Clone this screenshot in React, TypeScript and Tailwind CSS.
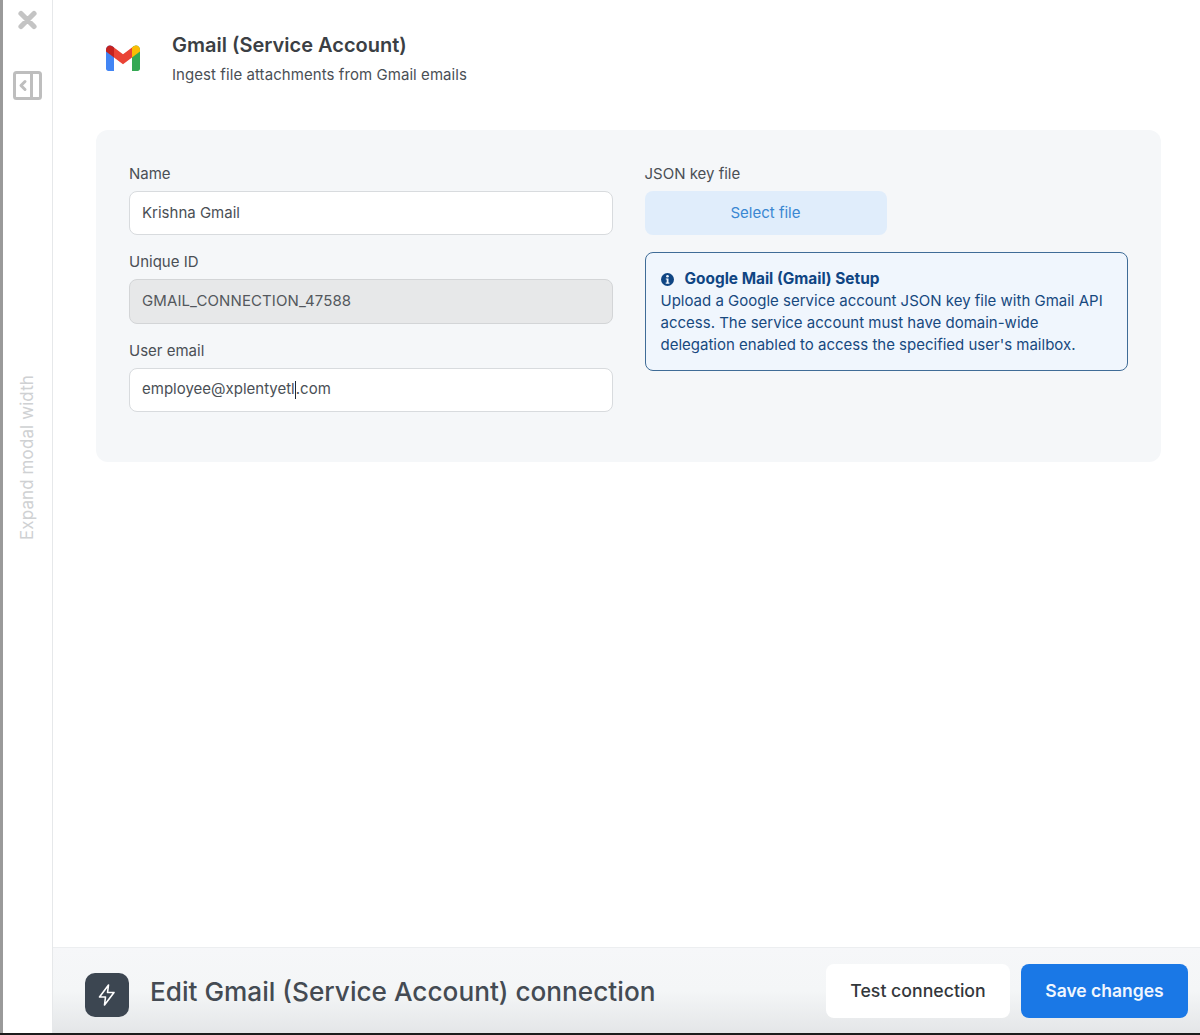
import React from "react";

function GmailIcon() {
  return (
    <svg width="34" height="26" viewBox="0 0 34 26" fill="none">
      <path d="M0 4.500C0 1.200 3.600-.8 6.400 1.200L8 2.400V26H2.400C1 26 0 25 0 23.600Z" fill="#4285F4" />
      <path d="M34 4.500C34 1.200 30.400-.8 27.600 1.200L26 2.400V26h5.600c1.400 0 2.400-1 2.400-2.400Z" fill="#34A853" />
      <path d="M26 2.400 17 9.200 8 2.400V12.400l9 6.800 9-6.800Z" fill="#EA4335" />
      <path d="M0 4.500C0 1.200 3.600-.8 6.400 1.200L8 2.400V12.400L0 6.400Z" fill="#C5221F" />
      <path d="M34 4.500C34 1.200 30.400-.8 27.600 1.200L26 2.400V12.400L34 6.400Z" fill="#FBBC04" />
    </svg>
  );
}

function CloseIcon() {
  return (
    <svg width="21" height="20" viewBox="0 0 21 20">
      <path d="M4 3.500 10.500 10M17 3.500 10.500 10M4 16.500 10.500 10M17 16.500 10.500 10" stroke="#c4c4c4" strokeWidth="5.200" strokeLinecap="round" />
    </svg>
  );
}

function CollapseIcon() {
  return (
    <svg width="29" height="29" viewBox="0 0 29 29" fill="none">
      <rect x="1.500" y="1.500" width="26" height="26" rx="2" stroke="#bebebe" strokeWidth="3" />
      <path d="M18.500 2v25" stroke="#bebebe" strokeWidth="3" />
      <path d="M12 10.500 8 14.500l4 4" stroke="#bebebe" strokeWidth="3" strokeLinecap="round" strokeLinejoin="round" />
    </svg>
  );
}

function Field({ label, children }: { label: string; children: React.ReactNode }) {
  return (
    <div className="flex flex-col">
      <label className="mb-[8px] text-[15px] leading-[18px] text-[#4a4f55]">{label}</label>
      {children}
    </div>
  );
}

export default function App() {
  return (
    <div className="flex h-[1035px] w-[1200px] overflow-hidden bg-white font-['Inter','Liberation_Sans',sans-serif]">
      <div className="w-[3px] shrink-0 bg-[#9a9a9a]" />
      <aside className="flex w-[50px] shrink-0 flex-col items-center border-r border-[#e6e8ea] pt-[10px]">
        <CloseIcon />
        <div className="mr-[1px] mt-[41px]">
          <CollapseIcon />
        </div>
        <div className="mr-[1px] mt-[272px] flex h-[170px] items-center justify-center">
          <span className="-rotate-90 whitespace-nowrap text-[17px] leading-none tracking-[0.1px] text-[#cfd1d3]">
            Expand modal width
          </span>
        </div>
      </aside>

      <main className="flex min-w-0 flex-1 flex-col">
        <div className="flex-1 pl-[43px] pr-[39px] pt-[34px]">
          <header className="flex items-start">
            <div className="ml-[10px] mt-[11px] shrink-0">
              <GmailIcon />
            </div>
            <div className="ml-[32px]">
              <h1 className="text-[20px] font-semibold leading-[22px] text-[#3b3f44]">Gmail (Service Account)</h1>
              <p className="mt-[10px] text-[15px] leading-[18px] tracking-[0.07px] text-[#4a4f55]">
                Ingest file attachments from Gmail emails
              </p>
            </div>
          </header>

          <section className="mt-[46px] grid h-[332px] grid-cols-2 gap-x-[32px] rounded-xl bg-[#f5f7f9] px-[33px] pt-[35px]">
            <div className="flex flex-col gap-[18px]">
              <Field label="Name">
                <div className="flex h-[44px] items-center rounded-lg border border-[#d8dbde] bg-white px-[12px] text-[15px] text-[#4a4f55]">
                  Krishna Gmail
                </div>
              </Field>
              <Field label="Unique ID">
                <div className="flex h-[45px] items-center rounded-lg border border-[#d3d5d7] bg-[#e7e8e9] px-[12px] text-[15px] tracking-[0.1px] text-[#54585d]">
                  GMAIL_CONNECTION_47588
                </div>
              </Field>
              <Field label="User email">
                <div className="flex h-[44px] items-center rounded-lg border border-[#d8dbde] bg-white px-[12px] pb-[1px] text-[15px] text-[#4a4f55]">
                  employee@xplentyetl
                  <span className="inline-block h-[18px] w-px bg-[#1f2937]" />
                  .com
                </div>
              </Field>
            </div>

            <div className="flex flex-col">
              <Field label="JSON key file">
                <button className="flex h-[44px] w-[242px] items-center justify-center rounded-lg bg-[#e0edfb] text-[15px] text-[#3a87d2]">
                  Select file
                </button>
              </Field>
              <div className="mt-[17px] h-[119px] rounded-lg border border-[#3f6c97] bg-[#f0f6fd] px-[15px] pt-[15px] text-[15px] leading-[22px] text-[#17497f]">
                <div className="flex h-[22px] items-center gap-[11px]">
                  <svg width="13" height="13" viewBox="0 0 13 13">
                    <circle cx="6.500" cy="6.500" r="6.500" fill="#0f4583" />
                    <circle cx="6.500" cy="3.300" r="1.300" fill="#f0f6fd" />
                    <path d="M4.800 5.400h2.700v4.200h.9v1.100H4.700V9.600h1V6.500h-.9Z" fill="#f0f6fd" />
                  </svg>
                  <strong className="text-[15.4px] font-bold text-[#0f4583]">Google Mail (Gmail) Setup</strong>
                </div>
                <p>
                  Upload a Google service account JSON key file with Gmail API access. The service account must have
                  domain-wide delegation enabled to access the specified user's mailbox.
                </p>
              </div>
            </div>
          </section>
        </div>

        <footer className="mb-[2px] flex h-[86px] shrink-0 items-center border-t border-[#eceef0] bg-gradient-to-b from-[#f6f7f9] via-[#f4f6f7] to-[#e4e6e8] pl-[32px] pr-[12px]">
          <div className="mt-[8px] flex h-[44px] w-[44px] shrink-0 items-center justify-center rounded-[10px] bg-[#3c4651]">
            <svg width="24" height="26" viewBox="0 0 24 24" fill="none" stroke="#ffffff" strokeWidth="1.600" strokeLinejoin="round">
              <path d="M13.500 2 4.500 14h6l-1 8 9.500-12.500h-6.500Z" />
            </svg>
          </div>
          <h2 className="ml-[21px] mt-[3px] text-[26.2px] font-medium leading-none text-[#444b53]">
            Edit Gmail (Service Account) connection
          </h2>
          <div className="ml-auto flex items-center gap-[11px]">
            <button className="h-[54px] w-[184px] rounded-lg bg-white pt-[2px] text-[17.7px] font-medium text-[#33373b]">
              Test connection
            </button>
            <button className="h-[54px] w-[167px] rounded-lg bg-[#1a78e6] pt-[2px] text-[17.5px] font-semibold text-[#f0f6fe]">
              Save changes
            </button>
          </div>
        </footer>
      </main>
      <div className="fixed bottom-0 left-0 h-[2px] w-full bg-[#1c1c1c]" />
    </div>
  );
}
